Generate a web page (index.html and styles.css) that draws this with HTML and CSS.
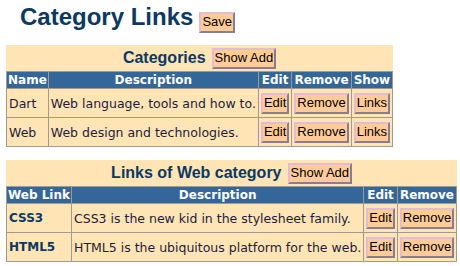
FILE: index.html
```html
<!DOCTYPE html>
<html lang="en">
<head>
    <meta charset="UTF-8">
    <title>Category Links</title>
    <link rel="stylesheet" href="styles.css">
</head>
<body>
    <div class="page-header">
        <h1 class="title">Category Links</h1>
        <button class="btn">Save</button>
    </div>

    <div class="panel">
        <div class="panel-caption">
            <span class="caption-text">Categories</span>
            <button class="btn">Show Add</button>
        </div>
        <table class="grid">
            <tr>
                <th>Name</th>
                <th>Description</th>
                <th>Edit</th>
                <th>Remove</th>
                <th>Show</th>
            </tr>
            <tr>
                <td>Dart</td>
                <td>Web language, tools and how to.</td>
                <td><button class="btn">Edit</button></td>
                <td><button class="btn">Remove</button></td>
                <td><button class="btn">Links</button></td>
            </tr>
            <tr>
                <td>Web</td>
                <td>Web design and technologies.</td>
                <td><button class="btn">Edit</button></td>
                <td><button class="btn">Remove</button></td>
                <td><button class="btn">Links</button></td>
            </tr>
        </table>
    </div>

    <div class="panel">
        <div class="panel-caption">
            <span class="caption-text">Links of Web category</span>
            <button class="btn">Show Add</button>
        </div>
        <table class="grid">
            <tr>
                <th>Web Link</th>
                <th>Description</th>
                <th>Edit</th>
                <th>Remove</th>
            </tr>
            <tr>
                <td class="link-name">CSS3</td>
                <td>CSS3 is the new kid in the stylesheet family.</td>
                <td><button class="btn">Edit</button></td>
                <td><button class="btn">Remove</button></td>
            </tr>
            <tr>
                <td class="link-name">HTML5</td>
                <td>HTML5 is the ubiquitous platform for the web.</td>
                <td><button class="btn">Edit</button></td>
                <td><button class="btn">Remove</button></td>
            </tr>
        </table>
    </div>
</body>
</html>
```

FILE: styles.css
```css
:root {
    --panel-bg: #ffe4b5;
    --head-bg: #336699;
    --title-color: #0b3864;
    --text-color: #1c1c3c;
    --grid-border: #a09a90;
    --btn-bg: #ffcc99;
}

body {
    margin: 0;
    padding: 0 6px;
    background: #ffffff;
    font-family: 'DejaVu Sans', Verdana, sans-serif;
    font-size: 12.5px;
    color: var(--text-color);
}

.page-header {
    display: flex;
    align-items: flex-start;
    padding: 3px 0 0 14px;
    margin-bottom: 12px;
}

.title {
    margin: 0 6px 0 0;
    font-family: 'Liberation Sans', Arial, sans-serif;
    font-size: 24px;
    font-weight: bold;
    line-height: 28px;
    color: var(--title-color);
}

.btn {
    margin: 0;
    padding: 1px 1px 2px;
    font-family: 'Liberation Sans', Arial, sans-serif;
    font-size: 13px;
    line-height: 14px;
    color: #000000;
    background-color: var(--btn-bg);
    border: 2px solid;
    border-color: #e2bcd4 #8c7c8c #8c7c8c #e2bcd4;
    border-radius: 0;
}

.page-header .btn {
    margin-top: 9px;
}

.panel {
    display: inline-block;
    background-color: var(--panel-bg);
    margin-bottom: 13px;
    vertical-align: top;
}

.panel-caption {
    display: flex;
    align-items: center;
    justify-content: center;
    gap: 6px;
    height: 26px;
}

.caption-text {
    font-family: 'Liberation Sans', Arial, sans-serif;
    font-size: 16px;
    font-weight: bold;
    color: var(--title-color);
}

.grid {
    border-collapse: collapse;
}

.grid th,
.grid td {
    border: 1px solid var(--grid-border);
    padding: 1px 2px;
    text-align: left;
    white-space: nowrap;
}

.grid th {
    background-color: var(--head-bg);
    color: #ffffff;
    font-size: 12px;
    font-weight: bold;
    line-height: 16px;
    text-align: center;
    padding: 0 1px;
}

.grid td {
    height: 26px;
}

.link-name {
    font-size: 12px;
    font-weight: bold;
    color: var(--title-color);
}
```
